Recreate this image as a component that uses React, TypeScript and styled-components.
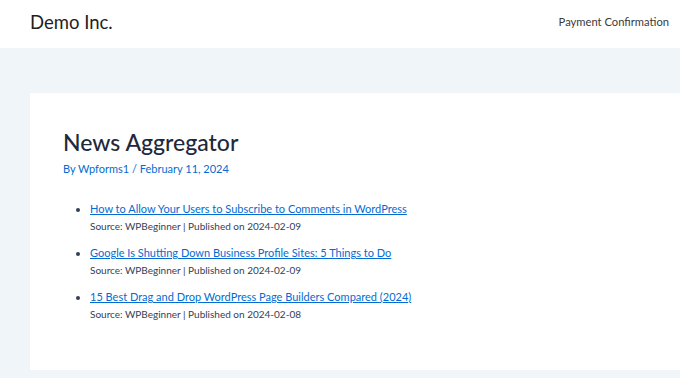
import { FC } from "react";
import styled, { createGlobalStyle } from "styled-components";

const Global = createGlobalStyle`
  html, body {
    margin: 0;
    padding: 0;
    background: #f0f5fa;
    font-family: Lato, "Noto Sans", sans-serif;
    overflow: hidden;
  }
`;

const news = [
  { tit: "How to Allow Your Users to Subscribe to Comments in WordPress", date: "2024-02-09" },
  { tit: "Google Is Shutting Down Business Profile Sites: 5 Things to Do", date: "2024-02-09" },
  { tit: "15 Best Drag and Drop WordPress Page Builders Compared (2024)", date: "2024-02-08" },
];

const App: FC = () => {
  return (
    <>
      <Global />
      <Styled.Header>
        <Styled.Logo>Demo Inc.</Styled.Logo>
        <Styled.Nav href="#">Payment Confirmation</Styled.Nav>
      </Styled.Header>
      <Styled.Main>
        <Styled.Card>
          <Styled.Title>News Aggregator</Styled.Title>
          <Styled.Meta>By Wpforms1 / February 11, 2024</Styled.Meta>
          <Styled.List>
            {news.map((a, i) => (
              <Styled.Item key={i}>
                <a href="#">{a.tit}</a>
                <Styled.Source>Source: WPBeginner | Published on {a.date}</Styled.Source>
              </Styled.Item>
            ))}
          </Styled.List>
        </Styled.Card>
      </Styled.Main>
    </>
  );
};

const Styled = {
  Header: styled.header`
    height: 48px;
    background: #fff;
    display: flex;
    align-items: center;
    justify-content: space-between;
    padding: 0 11px 0 30px;
  `,
  Logo: styled.div`
    font-size: 18.5px;
    color: #1e1e1e;
    margin-top: -4px;
  `,
  Nav: styled.a`
    font-size: 11.2px;
    color: #3a3a3a;
    text-decoration: none;
    margin-top: -5px;
  `,
  Main: styled.main`
    padding: 45px 0 8px 30px;
  `,
  Card: styled.article`
    background: #fff;
    height: 277px;
    box-sizing: border-box;
    padding: 33px 33px;
  `,
  Title: styled.h1`
    margin: 0;
    font-size: 23px;
    font-weight: 500;
    color: #1e293b;
    line-height: 32px;
  `,
  Meta: styled.div`
    font-size: 11px;
    color: #046bd2;
    margin-top: 3px;
    line-height: 16px;
  `,
  List: styled.ul`
    margin: 24px 0 0;
    padding-left: 27px;
  `,
  Item: styled.li`
    margin-bottom: 12px;
    color: #334155;
    font-size: 11px;
    line-height: 16px;
    a {
      color: #046bd2;
      text-decoration: underline;
    }
  `,
  Source: styled.div`
    font-size: 10px;
    color: #334155;
    margin-top: 2px;
    line-height: 14px;
  `,
};

export default App;
